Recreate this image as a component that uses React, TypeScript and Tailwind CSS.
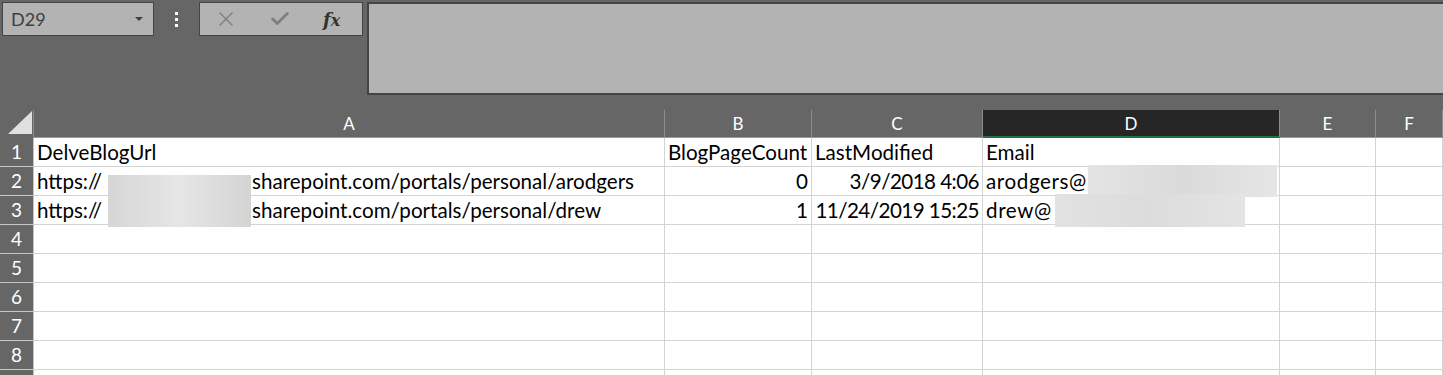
import { X, Check } from 'lucide-react';

const COLS = [
  { key: 'A', w: 'w-[631px]' },
  { key: 'B', w: 'w-[147px]' },
  { key: 'C', w: 'w-[171px]' },
  { key: 'D', w: 'w-[297px]' },
  { key: 'E', w: 'w-[96px]' },
  { key: 'F', w: 'flex-1' },
];

type Cell = { text?: string; right?: boolean; tight?: boolean; wide?: boolean; rest?: string };

const ROWS: Cell[][] = [
  [{ text: 'DelveBlogUrl' }, { text: 'BlogPageCount' }, { text: 'LastModified' }, { text: 'Email' }],
  [
    { text: 'https://', rest: 'sharepoint.com/portals/personal/arodgers' },
    { text: '0', right: true },
    { text: '3/9/2018 4:06', right: true, tight: true },
    { text: 'arodgers@', wide: true },
  ],
  [
    { text: 'https://', rest: 'sharepoint.com/portals/personal/drew' },
    { text: '1', right: true },
    { text: '11/24/2019 15:25', right: true, tight: true },
    { text: 'drew@', wide: true },
  ],
  [], [], [], [], [],
];

const cellFont = "font-['Lato',sans-serif] text-[20.6px] leading-none text-black";

const GridRow = ({ n, cells }: { n?: number; cells: Cell[] }) => (
  <div className="flex h-[29px] shrink-0">
    <div className="flex w-[34px] shrink-0 items-center justify-center border-b border-r border-b-[#c6c6c6] border-r-[#c6c6c6] bg-[#666666] pt-[1px] font-['Lato',sans-serif] text-[19px] text-white">
      {n}
    </div>
    {COLS.map((col, i) => {
      const cell = cells[i];
      return (
        <div
          key={col.key}
          className={`${col.w} shrink-0 flex items-end overflow-visible whitespace-nowrap border-b border-r border-[#d4d4d4] bg-white px-[3px] pb-[3px] ${cellFont} ${cell?.right ? 'justify-end' : ''} ${cell?.tight ? 'tracking-[-0.55px]' : ''} ${cell?.wide ? 'tracking-[0.6px]' : ''}`}
        >
          {cell?.rest ? (
            <>
              <span className="inline-block w-[215px]">{cell.text}</span>
              {cell.rest}
            </>
          ) : (
            cell?.text
          )}
        </div>
      );
    })}
  </div>
);

export default function App() {
  return (
    <div className="relative h-[375px] w-[1443px] overflow-hidden bg-[#666666]">
      {/* formula bar area */}
      <div className="flex h-[110px] items-start pt-[2px]">
        <div className="ml-[2px] flex h-[34px] w-[152px] items-center justify-between border border-[#444444] bg-[#b3b3b3] pl-[8px] pr-[10px]">
          <span className="font-['Lato',sans-serif] text-[18px] text-[#404040]">D29</span>
          <svg width="8" height="5" viewBox="0 0 8 5"><path d="M0 0h8L4 4z" fill="#404040" /></svg>
        </div>
        <div className="flex h-[34px] w-[45px] flex-col items-center justify-center gap-[3px]">
          <div className="h-[3px] w-[3px] bg-white" />
          <div className="h-[3px] w-[3px] bg-white" />
          <div className="h-[3px] w-[3px] bg-white" />
        </div>
        <div className="flex h-[34px] w-[164px] items-center border border-[#444444] bg-[#b3b3b3]">
          <X className="ml-[14px] h-[24px] w-[24px] text-[#808080]" strokeWidth={1.4} />
          <Check className="ml-[31px] h-[22px] w-[22px] text-[#808080]" strokeWidth={3.2} />
          <span className="ml-[32px] font-['DejaVu_Serif',serif] text-[18px] font-bold italic text-[#333333]">
            f<span className="text-[16px]">x</span>
          </span>
        </div>
        <div className="ml-[4px] h-[93px] flex-1 border-y-2 border-l-2 border-[#444444] bg-[#b3b3b3]" />
      </div>

      {/* column headers */}
      <div className="flex h-[28px]">
        <div className="flex w-[34px] shrink-0 items-end justify-end border-r border-[#8c8c8c] pb-[3px]">
          <svg width="25" height="24" viewBox="0 0 25 24"><path d="M0 23L24 0V23z" fill="#e0e0e0" /></svg>
        </div>
        {COLS.map(col => (
          <div
            key={col.key}
            className={`${col.w} shrink-0 flex items-center justify-center pt-[1px] font-['Lato',sans-serif] text-[17px] text-white ${
              col.key === 'D'
                ? 'border-b-2 border-b-[#217346] bg-[#262626] border-r border-r-[#8c8c8c]'
                : 'border-r border-[#8c8c8c] border-b border-b-[#9a9a9a]'
            }`}
          >
            {col.key}
          </div>
        ))}
      </div>

      {/* rows */}
      <div className="flex flex-col">
        {ROWS.map((cells, i) => (
          <GridRow key={i} n={i < 8 ? i + 1 : undefined} cells={cells} />
        ))}
        <GridRow cells={[]} />
      </div>

      {/* redaction blurs */}
      <div className="absolute left-[108px] top-[175px] h-[52px] w-[143px] bg-gradient-to-r from-[#d6d6d6] via-[#e6e6e6] to-[#d4d4d4]" />
      <div className="absolute left-[1088px] top-[165px] h-[32px] w-[189px] bg-gradient-to-r from-[#e4e4e4] via-[#dadada] to-[#e6e6e6]" />
      <div className="absolute left-[1055px] top-[194px] h-[33px] w-[190px] bg-gradient-to-r from-[#e2e2e2] via-[#dcdcdc] to-[#e4e4e4]" />
    </div>
  );
}
